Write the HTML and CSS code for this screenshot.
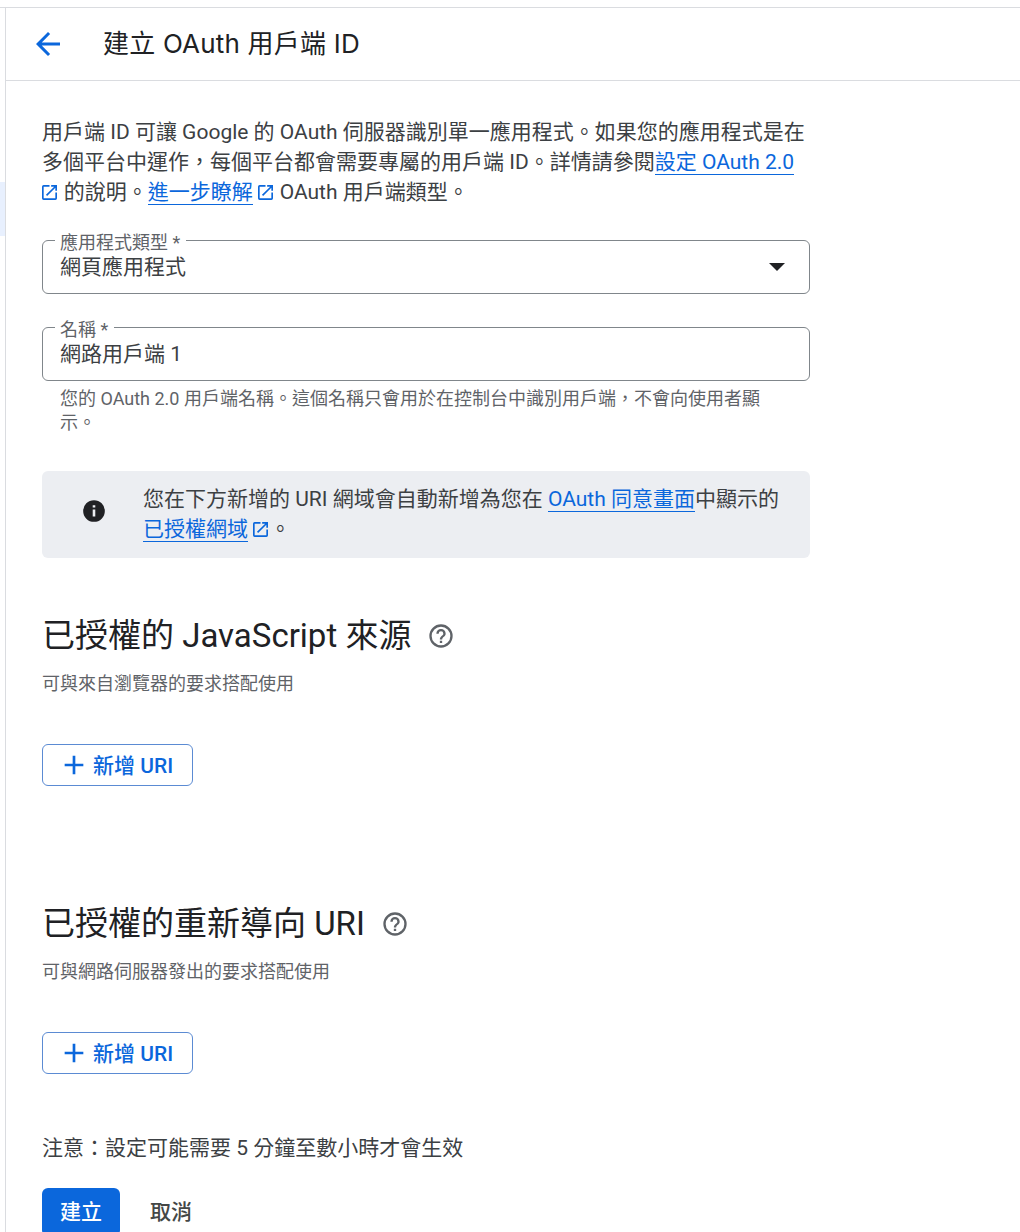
FILE: index.html
```html
<!DOCTYPE html>
<html lang="zh-Hant">
<head>
    <meta charset="UTF-8">
    <title>建立 OAuth 用戶端 ID</title>
    <link rel="stylesheet" href="styles.css">
</head>
<body>
    <div class="nav-strip"><div class="nav-active"></div></div>
    <div class="page">
        <header class="toolbar">
            <svg class="back-icon" viewBox="0 0 24 24" width="36" height="36"><path d="M20 11H7.83l5.59-5.59L12 4l-8 8 8 8 1.41-1.41L7.83 13H20v-2z"/></svg>
            <h1>建立 OAuth 用戶端 ID</h1>
        </header>
        <main class="content">
            <p class="intro">用戶端 ID 可讓 Google 的 OAuth 伺服器識別單一應用程式。如果您的應用程式是在多個平台中運作，每個平台都會需要專屬的用戶端 ID。詳情請參閱<a href="#">設定 OAuth 2.0</a> <svg class="ext-icon" viewBox="3 3 18 18"><path d="M19 19H5V5h7V3H5a2 2 0 0 0-2 2v14a2 2 0 0 0 2 2h14a2 2 0 0 0 2-2v-7h-2v7zM14 3v2h3.59l-9.83 9.83 1.41 1.41L19 6.41V10h2V3h-7z"/></svg> 的說明。<a href="#">進一步瞭解</a> <svg class="ext-icon" viewBox="3 3 18 18"><path d="M19 19H5V5h7V3H5a2 2 0 0 0-2 2v14a2 2 0 0 0 2 2h14a2 2 0 0 0 2-2v-7h-2v7zM14 3v2h3.59l-9.83 9.83 1.41 1.41L19 6.41V10h2V3h-7z"/></svg> OAuth 用戶端類型。</p>

            <div class="field field-type">
                <label>應用程式類型 *</label>
                <span class="field-value">網頁應用程式</span>
                <span class="select-arrow"></span>
            </div>

            <div class="field field-name">
                <label>名稱 *</label>
                <span class="field-value">網路用戶端 1</span>
            </div>
            <p class="hint">您的 OAuth 2.0 用戶端名稱。這個名稱只會用於在控制台中識別用戶端，不會向使用者顯示。</p>

            <div class="notice">
                <svg class="info-icon" viewBox="0 0 24 24" width="26" height="26"><path d="M12 2a10 10 0 1 0 0 20 10 10 0 0 0 0-20zm1.2 15h-2.4v-6.4h2.4V17zm0-8.2h-2.4V6.6h2.4v2.2z"/></svg>
                <p>您在下方新增的 URI 網域會自動新增為您在 <a href="#">OAuth 同意畫面</a>中顯示的<a href="#">已授權網域</a> <svg class="ext-icon" viewBox="3 3 18 18"><path d="M19 19H5V5h7V3H5a2 2 0 0 0-2 2v14a2 2 0 0 0 2 2h14a2 2 0 0 0 2-2v-7h-2v7zM14 3v2h3.59l-9.83 9.83 1.41 1.41L19 6.41V10h2V3h-7z"/></svg>。</p>
            </div>

            <section class="uri-section uri-origins">
                <h2>已授權的 JavaScript 來源 <svg class="help-icon" viewBox="0 0 24 24" width="28" height="28"><path d="M11 18h2v-2h-2v2zm1-16a10 10 0 1 0 0 20 10 10 0 0 0 0-20zm0 18a8 8 0 1 1 0-16 8 8 0 0 1 0 16zm0-14a4 4 0 0 0-4 4h2a2 2 0 1 1 4 0c0 2-3 1.75-3 5h2c0-2.25 3-2.5 3-5a4 4 0 0 0-4-4z"/></svg></h2>
                <p class="section-sub">可與來自瀏覽器的要求搭配使用</p>
                <button class="add-btn" type="button"><svg viewBox="0 0 24 24" width="32" height="32"><path d="M19 13h-6v6h-2v-6H5v-2h6V5h2v6h6v2z"/></svg>新增 URI</button>
            </section>

            <section class="uri-section uri-redirect">
                <h2>已授權的重新導向 URI <svg class="help-icon" viewBox="0 0 24 24" width="28" height="28"><path d="M11 18h2v-2h-2v2zm1-16a10 10 0 1 0 0 20 10 10 0 0 0 0-20zm0 18a8 8 0 1 1 0-16 8 8 0 0 1 0 16zm0-14a4 4 0 0 0-4 4h2a2 2 0 1 1 4 0c0 2-3 1.75-3 5h2c0-2.25 3-2.5 3-5a4 4 0 0 0-4-4z"/></svg></h2>
                <p class="section-sub">可與網路伺服器發出的要求搭配使用</p>
                <button class="add-btn" type="button"><svg viewBox="0 0 24 24" width="32" height="32"><path d="M19 13h-6v6h-2v-6H5v-2h6V5h2v6h6v2z"/></svg>新增 URI</button>
            </section>

            <p class="note">注意：設定可能需要 5 分鐘至數小時才會生效</p>
            <div class="actions">
                <button class="btn-create" type="button">建立</button>
                <button class="btn-cancel" type="button">取消</button>
            </div>
        </main>
    </div>
</body>
</html>
```

FILE: styles.css
```css
html, body {
    height: 100%;
    overflow: hidden;
}

body {
    margin: 0;
    padding-top: 7px;
    box-sizing: border-box;
    display: flex;
    font-family: Roboto, "Noto Sans CJK TC", sans-serif;
    color: #3c4043;
    background: #fff;
}

body::before {
    content: "";
    position: absolute;
    top: 7px;
    left: 0;
    right: 0;
    border-top: 1px solid #dadce0;
}

.nav-strip {
    width: 5px;
    flex-shrink: 0;
    padding-top: 175px;
}

.nav-active {
    height: 54px;
    background: #e8f0fe;
}

.page {
    flex: 1;
    border-left: 1px solid #dadce0;
    min-width: 0;
}

.toolbar {
    height: 72px;
    margin-top: 1px;
    display: flex;
    align-items: center;
    border-bottom: 1px solid #dadce0;
}

.back-icon {
    fill: #0b67dc;
    margin-left: 24px;
}

h1 {
    margin: 0 0 0 37px;
    padding-bottom: 6px;
    font-family: Inter, "Noto Sans CJK TC", sans-serif;
    font-size: 26px;
    font-weight: 400;
    letter-spacing: 0.2px;
    color: #202124;
}

.content {
    width: 768px;
    padding: 36px 0 0 36px;
}

a {
    color: #0b67dc;
    text-decoration: none;
    border-bottom: 1px solid #0b67dc;
}

.ext-icon {
    width: 15px;
    height: 15px;
    margin-right: 1.5px;
    fill: #0b67dc;
    vertical-align: -1px;
}

.intro {
    margin: 0;
    font-size: 21px;
    line-height: 30px;
}

.field {
    position: relative;
    box-sizing: border-box;
    height: 54px;
    border: 1px solid #80868b;
    border-radius: 6px;
    padding: 0 17px;
    display: flex;
    align-items: center;
}

.field-type {
    margin-top: 33px;
}

.field-name {
    margin-top: 33px;
}

.field label {
    position: absolute;
    top: -7px;
    left: 12px;
    padding: 0 6px 0 5px;
    background: #fff;
    font-size: 18px;
    line-height: 18px;
    color: #5f6368;
}

.field-value {
    font-size: 21px;
    line-height: 28px;
    color: #3c4043;
}

.select-arrow {
    position: absolute;
    right: 24px;
    top: 22px;
    border-left: 8px solid transparent;
    border-right: 8px solid transparent;
    border-top: 8px solid #202124;
}

.hint {
    margin: 6px 40px 0 18px;
    font-size: 18px;
    line-height: 24px;
    color: #5f6368;
}

.notice {
    margin-top: 36px;
    height: 87px;
    background: #eceef2;
    border-radius: 6px;
    display: flex;
    align-items: center;
    color: #3c4043;
}

.info-icon {
    fill: #202124;
    margin: 0 0 7px 39px;
    flex-shrink: 0;
}

.notice p {
    margin: 0 28px 0 36px;
    padding-bottom: 2px;
    font-size: 21px;
    line-height: 30px;
}

.uri-section h2 {
    margin: 0;
    display: flex;
    align-items: center;
    gap: 16px;
    font-size: 33px;
    font-weight: 400;
    line-height: 44px;
    color: #202124;
}

.help-icon {
    fill: #5f6368;
}

.uri-origins {
    margin-top: 56px;
}

.uri-redirect {
    margin-top: 116px;
}

.section-sub {
    margin: 14px 0 0;
    font-size: 18px;
    line-height: 24px;
    color: #5f6368;
}

.add-btn {
    margin-top: 48px;
    height: 42px;
    width: 151px;
    padding: 0 0 3px 15px;
    display: flex;
    align-items: center;
    gap: 3px;
    background: #fff;
    border: 1px solid #5b8bd3;
    border-radius: 6px;
    font-family: inherit;
    font-size: 21px;
    font-weight: 500;
    color: #0b67dc;
}

.add-btn svg {
    margin-top: 3px;
    fill: #0b67dc;
}

.note {
    margin: 59px 0 0;
    font-size: 21px;
    line-height: 30px;
}

.actions {
    margin-top: 25px;
    display: flex;
    gap: 12px;
}

.actions button {
    width: 78px;
    height: 48px;
    padding-bottom: 6px;
    border: none;
    border-radius: 6px;
    font-family: inherit;
    font-size: 21px;
    font-weight: 500;
}

.btn-create {
    background: #0b67dc;
    color: #fff;
}

.btn-cancel {
    background: none;
    color: #444746;
}
```
